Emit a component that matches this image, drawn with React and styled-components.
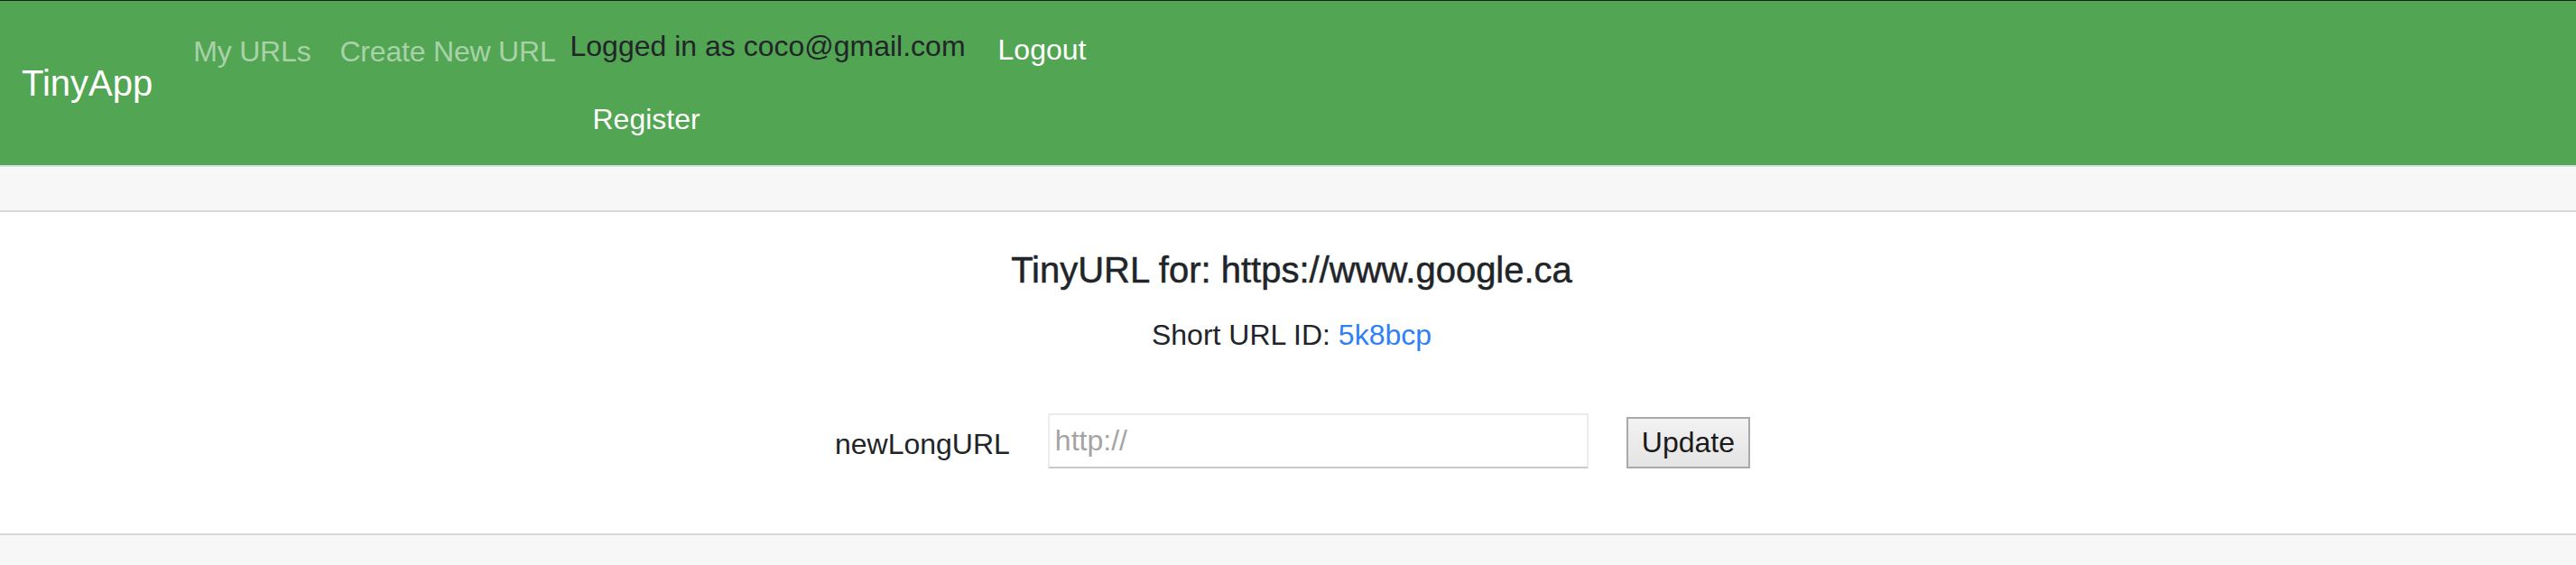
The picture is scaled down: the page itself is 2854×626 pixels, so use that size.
import React from "react";
import styled, { createGlobalStyle } from "styled-components";

const GlobalStyle = createGlobalStyle`
  * {
    box-sizing: border-box;
  }
  body {
    margin: 0;
    background: #ffffff;
    color: #212529;
    font-family: "Liberation Sans", Arial, sans-serif;
    font-size: 32px;
  }
`;

const App = () => {
  return (
    <>
      <GlobalStyle />
      <Nav>
        <Brand href="#">TinyApp</Brand>
        <NavLinks>
          <NavLink href="#">My URLs</NavLink>
          <NavLink href="#">Create New URL</NavLink>
        </NavLinks>
        <UserArea>
          <UserRow>
            <LoggedIn>Logged in as coco@gmail.com</LoggedIn>
            <Logout href="#">Logout</Logout>
          </UserRow>
          <Register href="#">Register</Register>
        </UserArea>
      </Nav>
      <Card>
        <CardHeader />
        <CardBody>
          <Title>TinyURL for: https://www.google.ca</Title>
          <CardText>
            Short URL ID: <ShortLink href="#">5k8bcp</ShortLink>
          </CardText>
          <UpdateForm>
            <Label htmlFor="newLongURL">newLongURL</Label>
            <UrlInput id="newLongURL" type="text" placeholder="http://" />
            <UpdateButton type="button">Update</UpdateButton>
          </UpdateForm>
        </CardBody>
        <CardFooter />
      </Card>
    </>
  );
};

const Nav = styled.nav`
  display: flex;
  align-items: flex-start;
  height: 183px;
  padding: 16px 0 16px 24px;
  border-top: 1px solid #1e1e1e;
  background: #52a552;
`;

const Brand = styled.a`
  align-self: center;
  margin-right: 29px;
  font-size: 40px;
  line-height: 60px;
  color: #ffffff;
  text-decoration: none;
`;

const NavLinks = styled.div`
  display: flex;
`;

const NavLink = styled.a`
  padding: 16px;
  line-height: 48px;
  color: rgba(255, 255, 255, 0.5);
  text-decoration: none;
  letter-spacing: -0.2px;
`;

const UserArea = styled.div`
  display: flex;
  flex-direction: column;
  align-items: flex-start;
  margin-top: 10px;
`;

const UserRow = styled.div`
  display: flex;
  align-items: flex-start;
`;

const LoggedIn = styled.span`
  line-height: 48px;
  color: #212529;
`;

const Logout = styled.a`
  margin: 4px 0 0 36px;
  line-height: 48px;
  color: #ffffff;
  text-decoration: none;
`;

const Register = styled.a`
  margin: 29px 0 0 25px;
  line-height: 48px;
  color: #ffffff;
  text-decoration: none;
`;

const Card = styled.div`
  border-top: 2px solid #dfdfdf;
`;

const CardHeader = styled.div`
  height: 50px;
  background: #f7f7f7;
  border-bottom: 2px solid #d8d8d8;
`;

const CardBody = styled.div`
  padding: 40px 0 40px 8px;
  text-align: center;
`;

const Title = styled.h5`
  margin: 0 0 24px;
  font-size: 40px;
  font-weight: 400;
  line-height: 48px;
  -webkit-text-stroke: 0.5px #212529;
`;

const CardText = styled.p`
  margin: 0;
  line-height: 48px;
`;

const ShortLink = styled.a`
  color: #2f7ff6;
  text-decoration: none;
`;

const UpdateForm = styled.form`
  display: flex;
  align-items: flex-end;
  justify-content: center;
  gap: 42px;
  height: 61px;
  margin: 63px 0 32px;
  padding-left: 2px;
`;

const Label = styled.label`
  margin-bottom: 3px;
  line-height: 48px;
`;

const UrlInput = styled.input`
  width: 599px;
  height: 61px;
  padding: 0 6px;
  border: 2px solid #ececec;
  border-bottom-color: #c9c9c9;
  background: #ffffff;
  font-family: "Liberation Sans", Arial, sans-serif;
  font-size: 32px;
  color: #212529;
  outline: none;
  &::placeholder {
    color: #a4a4a4;
  }
`;

const UpdateButton = styled.button`
  height: 57px;
  padding: 0 15px;
  border: 2px solid #a9a9a9;
  background: linear-gradient(#f2f2f2, #e4e4e4);
  font-family: "Liberation Sans", Arial, sans-serif;
  font-size: 32px;
  color: #1a1a1a;
`;

const CardFooter = styled.div`
  height: 40px;
  background: #f7f7f7;
  border-top: 2px solid #d8d8d8;
`;

export default App;
